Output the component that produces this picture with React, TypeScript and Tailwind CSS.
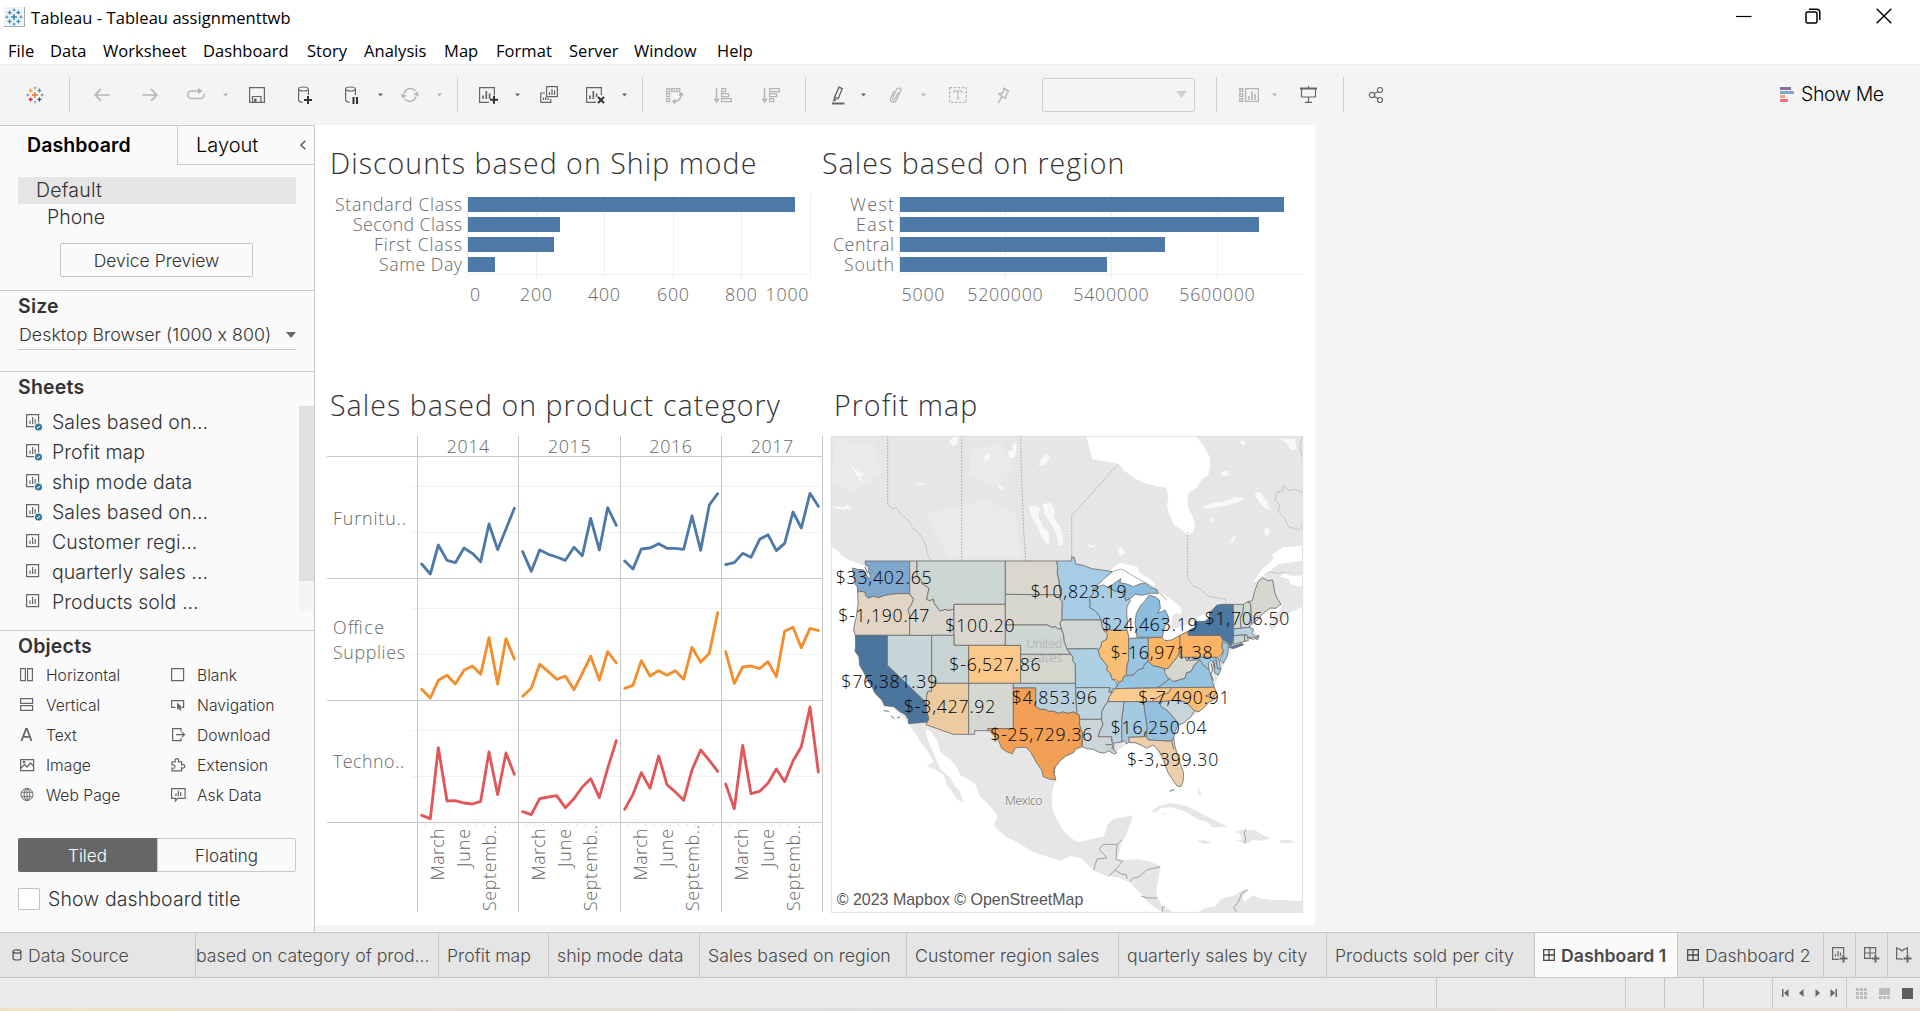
import React from "react";

const UI = "font-['Inter'] font-light [font-feature-settings:'calt'_0]";
const VIZ = "'Open Sans', 'Noto Sans', sans-serif";

type IconProps = { className?: string; children: React.ReactNode; w?: number; h?: number };

function Icon({ className = "", children, w = 18, h = 18 }: IconProps) {
  return (
    <svg
      className={"shrink-0 " + className}
      width={w}
      height={h}
      viewBox={`0 0 ${w} ${h}`}
      fill="none"
      stroke="currentColor"
      strokeWidth="1.2"
    >
      {children}
    </svg>
  );
}

function Caret({ className }: { className: string }) {
  return (
    <svg className={"shrink-0 " + className} width="5" height="4" viewBox="0 0 5 4" fill="currentColor">
      <path d="M0 .5h5L2.500 3.500z" />
    </svg>
  );
}

function Sep({ className }: { className: string }) {
  return <div className={"h-[35px] w-px shrink-0 bg-[#cfcfcf] " + className} />;
}

function Logo({ colors }: { colors: string[] }) {
  const plus = (x: number, y: number, r: number) => `M${x - r} ${y}h${2 * r}M${x} ${y - r}v${2 * r}`;
  return (
    <g strokeWidth="1.300">
      <path d={plus(9, 9, 3)} stroke={colors[0]} strokeWidth="1.500" />
      <path d={plus(4.6, 4.6, 2)} stroke={colors[1]} />
      <path d={plus(13.400, 4.600, 2)} stroke={colors[2]} />
      <path d={plus(4.600, 13.400, 2)} stroke={colors[3]} />
      <path d={plus(13.400, 13.400, 2)} stroke={colors[4]} />
      <path d={plus(9, 1.900, 1.500) + plus(9, 16.100, 1.500)} stroke={colors[5]} strokeWidth="1" />
      <path d={plus(1.900, 9, 1.500) + plus(16.100, 9, 1.500)} stroke={colors[6]} strokeWidth="1" />
    </g>
  );
}

function TitleBar() {
  return (
    <div className="flex h-8 items-center bg-white pl-1">
      <div className="mt-[2px] flex h-[20px] w-[21px] items-center justify-center border-r border-b border-[#a8a8a8] bg-[#f1f3f5]">
        <Icon>
          <Logo colors={["#2f86bd", "#3c8cc0", "#3c8cc0", "#3c8cc0", "#3c8cc0", "#3c8cc0", "#3c8cc0"]} />
        </Icon>
      </div>
      <div className="mt-[3px] ml-[6px] w-[270px] font-['Open_Sans'] text-[16.5px] leading-6 tracking-[0.06px] whitespace-nowrap text-black">
        Tableau - Tableau assignmenttwb
      </div>
      <div className="mr-[28px] ml-auto flex items-center text-black">
        <Icon w={16} h={16} className="mr-[53px]">
          <path d="M0 8.500h15.500" />
        </Icon>
        <Icon w={16} h={16} className="mr-[55px]">
          <rect x="1" y="4" width="11" height="11" rx="1.500" strokeWidth="1.500" />
          <path d="M4 1.200h7.500a3.300 3.300 0 0 1 3.300 3.300V12" strokeWidth="1.500" />
        </Icon>
        <Icon w={16} h={16}>
          <path d="M.7.7l14.600 14.600M15.300.7L.7 15.300" strokeWidth="1.400" />
        </Icon>
      </div>
    </div>
  );
}

function MenuBar() {
  const items: [string, string][] = [
    ["File", "w-[26px]"],
    ["Data", "w-[37px]"],
    ["Worksheet", "w-[84px]"],
    ["Dashboard", "w-[88px]"],
    ["Story", "w-[41px]"],
    ["Analysis", "w-[64px]"],
    ["Map", "w-[36px]"],
    ["Format", "w-[57px]"],
    ["Server", "w-[49px]"],
    ["Window", "w-[67px]"],
    ["Help", "w-[37px]"],
  ];
  return (
    <div className="flex h-8 items-center gap-4 bg-white pl-2 font-['Open_Sans'] text-[16.500px] tracking-[0.05px] text-black">
      {items.map(([label, w]) => (
        <span key={label} className={"pt-[5px] leading-6 whitespace-nowrap " + w}>
          {label}
        </span>
      ))}
    </div>
  );
}

function Toolbar() {
  const dim = "text-[#b4b4b4]";
  const on = "text-[#666]";
  return (
    <div className="flex h-[61px] items-center border-t border-[#ececec] bg-[#f4f4f4] pb-px pl-[26px]">
      <Icon>
        <Logo colors={["#e8762c", "#f0a04b", "#5c8ca3", "#c72037", "#2f4a75", "#7fa8c0", "#7a8fb5"]} />
      </Icon>
      <Sep className="ml-[25px]" />
      <Icon w={16} className={"ml-[24px] " + dim}>
        <path d="M15.500 9H1.500M7 3L1.200 9 7 15" strokeWidth="1.700" />
      </Icon>
      <Icon w={16} className={"ml-8 " + dim}>
        <path d="M.5 9h14M9 3l5.800 6L9 15" strokeWidth="1.700" />
      </Icon>
      <Icon className={"ml-[29px] " + dim}>
        <path d="M11 5H4a3 3 0 0 0-3 3v1.500a3 3 0 0 0 3 3h10a3 3 0 0 0 3-3V7.500" strokeWidth="1.400" />
        <path d="M11 2l4.500 3-4.500 3z" fill="currentColor" stroke="none" />
      </Icon>
      <Caret className={"ml-[18px] " + dim} />
      <Icon w={16} className={"ml-[21px] " + on}>
        <path d="M.6 1.600h14.800v14.800H.6zM3.500 16v-5.500h8.500V16" />
        <path d="M5 12.500h2.500V16H5z" fill="currentColor" stroke="none" />
      </Icon>
      <Icon w={14} className={"ml-[33px] " + on}>
        <ellipse cx="5.500" cy="3" rx="4.900" ry="2" />
        <path d="M.6 3v11c0 1 1.500 2 4 2.300M10.400 3v6" />
        <path d="M6 14h8M10 10v8" stroke="#333" strokeWidth="2" />
      </Icon>
      <Icon w={14} className={"ml-[33px] " + on}>
        <ellipse cx="5.500" cy="3" rx="4.900" ry="2" />
        <path d="M.6 3v11c0 1 1.500 2 4 2.300M10.400 3v6" />
        <path d="M8.500 11v7M12 11v7" stroke="#333" strokeWidth="2" />
      </Icon>
      <Caret className={"ml-[19px] " + on} />
      <Icon className={"ml-[18px] " + dim}>
        <path d="M3 7.500a6.500 6.500 0 0 1 11.500-2.300M15 10.500a6.500 6.500 0 0 1-11.500 2.300" strokeWidth="1.400" />
        <path d="M0 7.500l1.500 5 4-3zM18 10.500l-1.500-5-4 3z" fill="currentColor" stroke="none" />
      </Icon>
      <Caret className={"ml-[18px] " + dim} />
      <Sep className="ml-[15px]" />
      <Icon w={20} className={"ml-[21px] " + on}>
        <path d="M10 16.400H.6V1.600h14.800V9" />
        <path d="M4 13V9.500M7.300 13V5M10.600 13V7.500" strokeWidth="1.700" />
        <path d="M11 13.700h8M15 9.700v8" stroke="#333" strokeWidth="2" />
      </Icon>
      <Caret className={"ml-[16px] " + on} />
      <Icon className={"ml-[20px] " + on}>
        <path d="M6.600.6h10.800v10H6.600zM5 7H.8v9.400h10V13" />
        <path d="M9.500 9V6M12 9V3M14.500 9V4.500M3.500 14v-2.500M5.700 14v-3M8 14v-2" />
      </Icon>
      <Icon w={20} className={"ml-[28px] " + on}>
        <path d="M10 16.400H.6V1.600h14.800V9" />
        <path d="M4 13V9.500M7.300 13V5M10.600 11V7.500" strokeWidth="1.700" />
        <path d="M12 11l6 6M18 11l-6 6" stroke="#333" strokeWidth="2" />
      </Icon>
      <Caret className={"ml-[16px] " + on} />
      <Sep className="ml-[15px]" />
      <Icon className={"ml-[23px] " + dim}>
        <path d="M.7 2.700h3v3h-3zM5.700 2.700h3v3h-3zM10.700 2.700h3v3h-3zM.7 7.700h3v3h-3zM.7 12.700h3v3h-3z" />
        <path d="M15 8c0 5-3 7.500-7 7.500M13 9.500L15 7l2.200 2.500M9.500 13.500l-2.500 2 2.500 2" strokeWidth="1.500" />
      </Icon>
      <Icon className={"ml-[30px] " + dim}>
        <path d="M2.500 2v12M0 12.500l2.500 3.500 2.500-3.500" strokeWidth="1.500" />
        <path d="M7.600 2.600h4v3h-4zM7.600 7.600h7v3h-7zM7.600 12.600h9.800v3H7.600z" />
      </Icon>
      <Icon className={"ml-[30px] " + dim}>
        <path d="M2.500 2v12M0 12.500l2.500 3.500 2.500-3.500" strokeWidth="1.500" />
        <path d="M7.600 2.600h9.800v3H7.600zM7.600 7.600h7v3h-7zM7.600 12.600h4v3h-4z" />
      </Icon>
      <Sep className="ml-[25px]" />
      <Icon w={14} h={20} className={"ml-[25px] " + on}>
        <path d="M8 2.200l3.200 1.500-4 10-3.700-1.500zM3.800 12.500l-1 3 2.500-1" strokeWidth="1.400" />
        <path d="M1 18.500h12.500" strokeWidth="2" />
      </Icon>
      <Caret className={"ml-[16px] " + on} />
      <Icon w={13} className={"ml-[23px] " + dim}>
        <path d="M9.500 6L6 13c-1 1.800-3 .8-2.300-1L7.500 3.500c1.200-2.500 5.200-1.500 4.200 1.500L7.500 14c-1.500 3.500-7 2.500-6-1.500L5 5" />
      </Icon>
      <Caret className={"ml-[19px] " + dim} />
      <Icon className={"ml-[23px] " + dim}>
        <rect x=".7" y="1.700" width="16.600" height="14.600" strokeDasharray="2.500 1.500" />
        <path d="M5 7V5h8v2M9 5v8M7.500 13h3" />
      </Icon>
      <Icon w={13} className={"ml-[30px] " + dim}>
        <path d="M6 1.800l6 3.500M7.500 3L5 7.500 1.500 8l7 4.500 1-4 2-3.500M4.700 10.500L1.500 17" strokeWidth="1.400" />
      </Icon>
      <div className="ml-8 flex h-[34px] w-[153px] shrink-0 items-center justify-end rounded-[2px] border border-[#cfcfcf] pr-[7px]">
        <svg width="11" height="7" viewBox="0 0 11 7" fill="#cfcfcf">
          <path d="M0 0h11L5.500 7z" />
        </svg>
      </div>
      <Sep className="ml-[21px]" />
      <Icon w={20} className={"ml-[22px] " + dim}>
        <path d="M.7 2.600h3v2.800h-3zM.7 7.600h3v2.800h-3zM.7 12.600h3v2.800h-3zM6.600 2.600h12.800v12.800H6.600z" strokeWidth="1.400" />
        <path d="M10 14v-4M13 14V5.500M16 14V8" strokeWidth="1.600" />
      </Icon>
      <Caret className={"ml-[13px] " + dim} />
      <Icon w={17} className={"ml-[23px] " + on}>
        <path d="M0 2.500h17" strokeWidth="2" />
        <path d="M1.500 3v8h14V3M8.500 11v5M5 16.300h7M8.500 0v2" />
      </Icon>
      <Sep className="ml-[26px]" />
      <Icon w={16} className={"ml-[24px] " + on}>
        <circle cx="4" cy="9" r="2.700" />
        <circle cx="12" cy="4" r="2.500" />
        <circle cx="12" cy="14" r="2.500" />
        <path d="M6.300 7.800l3.500-2.400M6.300 10.400l3.600 2.200" />
      </Icon>
      <Icon w={14} className="ml-[396px]">
        <g stroke="none">
          <path d="M0 1h11v3H0z" fill="#8a6f9b" />
          <path d="M0 5h14v3H0z" fill="#7fa5cb" />
          <path d="M0 9h5v3H0z" fill="#f3a484" />
          <path d="M0 13h8v3H0z" fill="#fb6d78" />
        </g>
      </Icon>
      <span className={UI + " ml-[7px] text-[19.5px] tracking-[-0.35px] whitespace-nowrap text-black"}>Show Me</span>
    </div>
  );
}

function SheetRow({ name, used }: { name: string; used: boolean }) {
  return (
    <li className="flex h-[30px] items-center pl-[26px]">
      <Icon w={18} h={18} className="mt-[1px] text-[#666]">
        <path d="M.6 1.600h12v12H.6z" />
        <path d="M4 11V7.500M6.600 11V4M9.200 11V6" />
        {used && (
          <g stroke="none">
            <circle cx="12.500" cy="14" r="4.500" fill="#fafafa" />
            <circle cx="12.500" cy="14" r="3.600" fill="#35789b" />
            <path d="M10.700 14l1.300 1.300 2.200-2.500" fill="none" stroke="#fff" strokeWidth="1" />
          </g>
        )}
      </Icon>
      <span className="ml-[8px] pt-[2px] text-[19.5px] leading-[28px] tracking-[0.05px] whitespace-nowrap">{name}</span>
    </li>
  );
}

const objectIcons: Record<string, React.ReactNode> = {
  Horizontal: <path d="M.6.6h4.800v12H.6zM7.600.6h4.800v12H7.600z" />,
  Vertical: <path d="M.6.6h12v4.800H.6zM.6 7.600h12v4.800H.6z" />,
  Text: <path d="M1.500 13L6 1h1l4.500 12M3.500 8.800h6" strokeWidth="1.800" />,
  Image: (
    <>
      <path d="M.6 1.600h13v11H.6zM1 10l3.500-3.500L7 9l3.500-4L13.500 8" />
      <circle cx="4" cy="4.200" r=".8" />
    </>
  ),
  "Web Page": (
    <>
      <circle cx="7" cy="6.500" r="6" strokeWidth="1" />
      <ellipse cx="7" cy="6.500" rx="2.800" ry="6" strokeWidth="1" />
      <path d="M7 .5v12M1.500 4.300h11M1.500 8.700h11" strokeWidth=".9" />
    </>
  ),
  Blank: <path d="M.6.6h12v12H.6z" />,
  Navigation: (
    <>
      <path d="M4.500 9.400H.6V2.600h12v6.800h-1.500" />
      <path d="M6 4.500l5.500 5h-2.300l1.300 2.500-1.600.7-1.200-2.500L6 12z" fill="currentColor" stroke="none" />
    </>
  ),
  Download: <path d="M10 3.500V.6H1.600v12H10V10M5 6.600h8.500M11 4.200l2.500 2.400L11 9" />,
  Extension: (
    <path d="M1 3.800h3.200C3.700 1.500 4.500.6 5.800.6s2.200 1 1.600 3.200h3.200v3c2.200-.6 3.200.2 3.200 1.500s-1 2.200-3.200 1.600v3H1v-2.700c2.200.3 3-.5 3-1.600S3 6.700 1 7z" />
  ),
  "Ask Data": (
    <>
      <path d="M.6.6h13.500v9.800H6.500L4.500 13v-2.600H.6z" />
      <path d="M5 8V5.500M7.300 8V2.500M9.700 8V4" />
    </>
  ),
};

function ObjectItem({ name }: { name: string }) {
  return (
    <div className="flex h-[30px] items-center">
      <Icon w={15} h={14} className="text-[#666]">
        {objectIcons[name]}
      </Icon>
      <span className="ml-[11px] pt-px text-[15.700px] whitespace-nowrap">{name}</span>
    </div>
  );
}

function Sidebar() {
  const sheets: [string, boolean][] = [
    ["Sales based on...", true],
    ["Profit map", true],
    ["ship mode data", true],
    ["Sales based on...", true],
    ["Customer regi...", false],
    ["quarterly sales ...", false],
    ["Products sold ...", false],
  ];
  const head = "text-[19.5px] leading-[30px] font-semibold tracking-[0.2px]";
  return (
    <aside className={UI + " flex w-[315px] shrink-0 flex-col border-t border-r border-[#cacaca] bg-[#fafafa] text-[#333]"}>
      <div className="flex h-[39px]">
        <div className="w-[177px] pl-[27px] text-[19.5px] leading-[38px] font-semibold tracking-[0.1px] text-black">Dashboard</div>
        <div className="flex flex-1 items-center border-b border-l border-[#cacaca] pl-[18px] text-[20px] text-black">
          Layout
          <Icon w={6} h={10} className="mr-[8px] ml-auto text-[#555]">
            <path d="M5.300.7L1 5l4.300 4.300" strokeWidth="1.400" />
          </Icon>
        </div>
      </div>
      <div className="h-[126px] border-b border-[#cacaca] px-[18px] pt-3">
        <div className="h-[27px] bg-[#e5e5e5] pl-[18px] text-[19.5px] leading-[27px] tracking-[0.2px]">Default</div>
        <div className="h-[27px] pl-[29px] text-[19.5px] leading-[27px]">Phone</div>
        <div className="mt-3 ml-[42px] h-[34px] w-[193px] rounded-[2px] border border-[#c4c4c4] text-center text-[17.5px] leading-[34px]">
          Device Preview
        </div>
      </div>
      <div className="h-[81px] border-b border-[#cacaca] px-[18px]">
        <div className={"h-[29px] " + head}>Size</div>
        <div className="flex h-[30px] items-center justify-between border-b border-[#cacaca] text-[17.800px] tracking-[0.05px]">
          <span className="pt-[2px] pl-[1px] whitespace-nowrap">Desktop Browser (1000 x 800)</span>
          <svg width="10" height="6" viewBox="0 0 10 6" fill="#666">
            <path d="M0 0h10L5 6z" />
          </svg>
        </div>
      </div>
      <div className="flex h-[259px] flex-col border-b border-[#cacaca]">
        <div className={"h-[34px] pl-[18px] " + head}>Sheets</div>
        <div className="flex h-[205px]">
          <ul className="flex-1">
            {sheets.map(([n, u], i) => (
              <SheetRow key={i} name={n} used={u} />
            ))}
          </ul>
          <div className="w-[15px] bg-[#f4f4f4]">
            <div className="h-[175px] bg-[#e0e0e0]" />
          </div>
        </div>
      </div>
      <div className={"h-[29px] pl-[18px] " + head}>Objects</div>
      <div className="flex pl-5">
        <div className="w-[151px]">
          {["Horizontal", "Vertical", "Text", "Image", "Web Page"].map((n) => (
            <ObjectItem key={n} name={n} />
          ))}
        </div>
        <div>
          {["Blank", "Navigation", "Download", "Extension", "Ask Data"].map((n) => (
            <ObjectItem key={n} name={n} />
          ))}
        </div>
      </div>
      <div className="mt-[28px] ml-[18px] flex h-[34px] w-[278px] text-center text-[17px]">
        <div className="w-[139px] rounded-l-[2px] bg-[#666] leading-[36px] text-white">Tiled</div>
        <div className="w-[139px] rounded-r-[2px] border border-[#c8c8c8] leading-[34px]">Floating</div>
      </div>
      <div className="mt-4 flex items-center pl-[18px]">
        <div className="h-[22px] w-[22px] rounded-[1px] border border-[#c4c4c4] bg-white" />
        <span className="ml-[8px] text-[19.5px] leading-[22px] tracking-[0.1px] whitespace-nowrap">Show dashboard title</span>
      </div>
    </aside>
  );
}

/* A text label spaced to an exact run length. */
function Label({
  x,
  y,
  len,
  anchor = "start",
  size = 17.8,
  children,
  fill = "#666",
}: {
  x: number;
  y: number;
  len: number;
  anchor?: "start" | "middle" | "end";
  size?: number;
  children: string;
  fill?: string;
}) {
  return (
    <text x={x} y={y} textLength={len} textAnchor={anchor} fontSize={size} fill={fill} fontFamily={VIZ} fontWeight="300">
      {children}
    </text>
  );
}

type Bar = { name: string; len: number; end: number };

function BarChart({
  viewBox,
  bars,
  x0,
  ticks,
  axisEnd,
  children,
}: {
  viewBox: string;
  bars: Bar[];
  x0: number;
  ticks: number[];
  axisEnd: number;
  children: React.ReactNode;
}) {
  return (
    <svg className="block" width="500" height="185" viewBox={viewBox}>
      <path d={ticks.map((t) => `M${t}.5 194v85`).join("") + `M${x0 - 1} 274.500H${axisEnd}`} stroke="#f0f0f0" />
      {bars.map((b, i) => (
        <g key={b.name}>
          <Label x={x0 - 6} y={211 + i * 20} len={b.len} anchor="end">
            {b.name}
          </Label>
          <rect x={x0} y={197 + i * 20} width={b.end - x0} height="15" fill="#4e79a7" />
        </g>
      ))}
      {children}
    </svg>
  );
}

const series: [string, string[]][] = [
  [
    "#4e79a7",
    [
      "305,402 331,432 355,345 381,391 406,398 432,354 457,370 482,395 507,282 533,359 583,235",
      "608,365 634,424 659,360 685,373 710,381 736,391 762,352 787,377 812,265 838,360 863,233 889,286",
      "914,393 939,417 964,357 990,354 1016,341 1041,355 1066,355 1091,358 1116,258 1142,361 1168,225 1193,191",
      "1217,404 1243,398 1268,370 1293,382 1319,328 1344,314 1369,362 1394,340 1419,246 1444,294 1470,190 1495,229",
    ],
  ],
  [
    "#f28e2b",
    [
      "305,778 331,804 355,751 381,736 406,762 432,721 457,708 482,733 507,623 533,762 558,626 583,687",
      "608,799 634,775 659,703 685,725 710,748 736,738 762,779 787,730 812,679 838,750 863,665 889,699",
      "914,775 939,766 964,692 990,738 1016,722 1041,736 1066,722 1091,748 1116,652 1142,697 1168,670 1193,548",
      "1217,665 1243,760 1268,711 1293,708 1319,716 1344,695 1369,740 1394,604 1419,592 1444,653 1470,595 1495,602",
    ],
  ],
  [
    "#e15759",
    [
      "305,1156 331,1166 355,953 381,1113 406,1112 432,1119 457,1122 482,1114 507,966 533,1094 558,969 583,1033",
      "608,1145 634,1154 659,1106 685,1101 710,1097 736,1133 762,1106 787,1071 812,1046 838,1103 863,1015 889,932",
      "914,1138 939,1093 964,1028 990,1075 1016,978 1041,1064 1066,1086 1091,1111 1116,1020 1142,960 1168,991 1193,1024",
      "1217,1062 1243,1136 1268,946 1293,1091 1319,1084 1344,1060 1369,1017 1394,1055 1419,993 1444,950 1470,831 1495,1026",
    ],
  ],
];

function CategoryChart() {
  const cols = [417, 518, 620, 721, 822];
  return (
    <svg className="block" width="510" height="501" viewBox="315 424 510 501">
      <path
        d={[486, 532, 608, 654, 730, 776].map((y) => `M412 ${y}.5H822`).join("")}
        stroke="#f2f2f2"
      />
      <path
        d={cols.slice(0, 4).map((c) => Array.from({ length: 11 }, (_, i) => `M${c + 8.500 + i * 8.400} 823v3`).join("")).join("")}
        stroke="#e4e4e4"
      />
      <path
        d={cols.map((c) => `M${c}.5 436V912`).join("") + [456, 578, 700, 822].map((y) => `M327 ${y}.5H823`).join("")}
        stroke="#c8c8c8"
      />
      {["2014", "2015", "2016", "2017"].map((y, i) => (
        <Label key={y} x={468 + i * 101.300} y={453} len={42.500} anchor="middle">
          {y}
        </Label>
      ))}
      <Label x={333} y={524.500} len={73}>Furnitu..</Label>
      <Label x={333} y={634} len={51}>Office</Label>
      <Label x={333} y={659} len={72}>Supplies</Label>
      <Label x={333} y={768} len={71}>Techno..</Label>
      {cols.slice(0, 4).map((c) => (
        <g key={c} transform={`translate(${c - 417} 0)`}>
          <g transform="translate(444 880.500) rotate(-90)">
            <Label x={0} y={0} len={52}>March</Label>
          </g>
          <g transform="translate(470 867) rotate(-90)">
            <Label x={0} y={0} len={38}>June</Label>
          </g>
          <g transform="translate(495.500 911) rotate(-90)">
            <Label x={0} y={0} len={86}>Septemb..</Label>
          </g>
        </g>
      ))}
      <g transform="translate(320 430) scale(.33333)" fill="none" strokeWidth="8.500" strokeLinejoin="round" strokeLinecap="round">
        {series.map(([color, lines]) => lines.map((p) => <polyline key={p} points={p} stroke={color} />))}
      </g>
    </svg>
  );
}

const states: [string, string][] = [
  ["#80a8cf", "120,393 254,393 254,491 222,491 200,493 180,496 160,503 145,499 130,504 122,498 120,487 108,484 98,486 97,470 90,462 93,452 88,440 82,414 98,418 116,420 124,434 134,448 136,438 130,424 132,410 122,405"],
  ["#e3d5c3", "98,486 108,484 120,487 122,498 130,504 145,499 160,503 180,496 200,493 222,491 253,491 266,508 259,524 249,540 254,553 254,616 91,616 86,600 88,585 94,560 100,520"],
  ["#4c759e", "91,616 187,616 187,705 304,818 305,842 312,866 308,876 251,881 250,868 240,853 226,846 206,830 178,827 172,812 150,790 144,776 126,748 118,730 104,706 102,680 90,664 92,650"],
  ["#c6d5d8", "187,616 320,616 320,784 309,784 305,796 304,818 187,705"],
  ["#d7d5cd", "254,393 276,393 276,436 290,452 290,460 312,475 305,508 314,512 325,507 328,520 345,543 360,538 372,541 387,537 387,616 254,616 254,553 249,540 259,524 266,508 254,491"],
  ["#ccd7d4", "276,393 541,393 541,523 387,523 387,537 372,541 360,538 345,543 328,520 325,507 314,512 305,508 312,475 290,460 290,452 276,436"],
  ["#dbd6cf", "387,523 541,523 541,646 387,646"],
  ["#c9d5d5", "320,616 387,616 387,646 431,646 431,760 320,760"],
  ["#f9c88a", "431,646 587,646 587,760 431,760"],
  ["#edcba1", "320,760 431,760 431,913 385,913 303,884 312,866 305,842 304,818 305,796 309,784 320,784"],
  ["#d5d7d1", "431,760 565,760 565,896 489,896 492,902 449,902 449,913 431,913"],
  ["#dad7cf", "541,393 695,393 698,410 697,430 702,450 704,475 708,495 541,493"],
  ["#d8d7cf", "541,493 708,495 704,505 712,515 711,570 705,580 710,598 698,596 690,590 680,592 668,585 541,585"],
  ["#ced7d4", "541,585 668,585 680,592 690,590 698,596 710,598 716,615 718,635 726,655 735,673 587,673 587,646 541,646"],
  ["#d5d7cf", "587,673 735,673 745,682 742,690 751,702 751,760 587,760"],
  ["#bbd2de", "565,760 751,760 752,800 756,852 745,846 730,850 714,846 700,850 684,843 672,845 660,838 645,838 632,830 632,774 565,774"],
  ["#f1a056", "565,774 632,774 632,830 645,838 660,838 672,845 684,843 700,850 714,846 730,850 745,846 763,855 764,885 773,912 770,950 752,956 745,968 722,978 704,994 690,1012 687,1030 693,1050 672,1047 655,1040 650,1020 636,1000 618,968 604,952 580,952 570,955 562,972 545,965 530,955 522,935 505,915 487,896 565,896"],
  ["#a6cde5", "695,393 740,393 740,380 748,382 752,402 775,406 800,416 830,420 862,425 835,448 815,468 803,478 805,492 793,502 796,522 793,532 810,542 822,556 828,570 711,570 712,515 704,505 708,495 704,475 702,450 697,430 698,410"],
  ["#d1d7d2", "711,570 828,570 832,590 836,600 848,613 845,628 830,636 828,650 820,660 816,656 726,657 718,635 716,615 710,598 705,580"],
  ["#add0e4", "726,657 816,656 820,662 825,680 840,700 848,708 845,720 855,728 862,748 875,758 877,768 870,778 862,776 860,786 851,786 855,773 752,773 751,702 742,690 745,682"],
  ["#bdd3de", "752,773 855,773 851,786 862,788 852,802 848,815 838,830 830,846 830,868 764,868 763,855 756,852"],
  ["#ccd6d6", "764,868 830,868 834,885 826,900 820,920 860,920 860,932 868,945 860,955 876,968 868,972 850,962 838,970 820,966 805,958 785,956 772,950 773,912 764,885"],
  ["#a9cee4", "805,478 818,470 835,465 850,472 868,482 890,488 900,500 902,512 912,506 916,512 906,530 905,550 907,575 906,601 836,600 832,590 828,570 822,556 810,542 793,532 796,522 793,502 805,492"],
  ["#f8bf75", "836,600 906,601 911,618 911,690 905,710 905,730 895,742 893,752 880,757 876,750 862,748 855,728 845,720 848,708 840,700 825,680 820,662 828,650 830,636 845,628 848,613"],
  ["#8dbddd", "850,472 870,458 888,446 884,458 905,462 925,470 945,462 962,458 975,472 995,478 1000,490 975,490 950,496 930,492 918,505 912,506 902,512 900,500 890,488 868,482"],
  ["#8dbddd", "972,496 990,500 1003,510 1006,535 998,550 1010,545 1020,540 1031,562 1028,575 1018,590 1012,622 936,622 934,600 930,580 934,550 948,525 958,515"],
  ["#9ac4df", "911,625 970,624 970,692 958,704 955,715 940,720 925,735 905,737 905,710 911,690"],
  ["#fdb563", "970,624 1010,622 1020,632 1040,630 1065,616 1065,655 1058,680 1045,695 1030,715 1018,717 1000,710 985,708 970,695"],
  ["#fdb366", "1065,616 1088,604 1090,616 1186,616 1194,630 1190,648 1196,665 1180,682 1065,682"],
  ["#4c77a1", "1088,604 1112,590 1108,575 1140,574 1158,560 1155,548 1175,526 1190,523 1225,523 1226,615 1222,642 1215,650 1212,640 1194,630 1186,616 1090,616"],
  ["#4c77a1", "1213,652 1250,640 1256,644 1225,656"],
  ["#d3d6d0", "1225,523 1256,523 1254,545 1246,565 1248,595 1226,597"],
  ["#cdd7d4", "1256,523 1268,515 1277,520 1280,580 1272,592 1248,595 1246,565 1254,545"],
  ["#d7d7cf", "1268,515 1282,512 1290,480 1300,455 1312,444 1330,452 1343,450 1350,490 1358,508 1368,522 1352,535 1335,534 1312,552 1300,568 1286,578 1280,580 1277,520"],
  ["#b8d3df", "1226,597 1272,592 1286,598 1280,608 1290,620 1302,616 1298,630 1286,622 1268,622 1264,614 1226,617"],
  ["#c6d6d8", "1226,617 1258,615 1260,634 1225,643"],
  ["#d4d7d2", "1258,615 1268,618 1270,632 1260,634"],
  ["#9cc7e1", "1194,636 1210,642 1210,655 1206,680 1194,700 1184,690 1196,665 1190,648"],
  ["#a2cae3", "1080,682 1172,682 1178,716 1188,716 1180,735 1170,730 1165,700 1158,690 1150,700 1152,720 1135,705 1120,692 1105,690 1090,694"],
  ["#b3d1e2", "1172,682 1182,688 1186,716 1178,716"],
  ["#98c4e0", "905,737 925,735 940,720 955,715 958,704 970,695 985,708 1000,710 1018,717 1024,735 1034,742 1020,758 998,773 870,776 877,768 880,757 893,752 895,742"],
  ["#d8d7cf", "1018,717 1030,715 1045,695 1058,680 1065,660 1065,682 1080,682 1085,692 1105,690 1125,690 1108,705 1098,725 1085,728 1080,745 1062,750 1045,755 1030,745 1020,730"],
  ["#96c3e0", "998,773 1020,758 1034,745 1045,755 1062,750 1080,745 1085,728 1098,725 1108,705 1125,690 1135,705 1152,720 1160,740 1162,755 1168,772"],
  ["#fccb90", "870,776 1040,773 1032,788 1010,795 988,808 980,815 850,815 852,802 862,788"],
  ["#f9be78", "1040,773 1168,772 1176,790 1165,800 1172,806 1150,818 1138,832 1122,845 1108,842 1085,818 1060,812 1040,812 1010,815 980,815 988,808 1010,795 1032,788"],
  ["#c8d6d7", "1010,815 1040,812 1060,812 1085,818 1108,842 1098,860 1075,880 1062,884 1050,868 1030,845 1005,826"],
  ["#93c0df", "955,815 1010,815 1005,826 1030,845 1050,868 1060,885 1050,905 1046,925 1040,934 970,930 964,920 966,890"],
  ["#a4cae2", "897,815 955,815 966,890 964,920 910,922 914,934 905,942 898,932 890,936 890,870"],
  ["#c0d3dc", "848,815 897,815 890,870 890,936 875,938 862,940 860,920 820,920 826,900 834,885 830,868 830,846 838,830"],
  ["#ecd0ab", "910,922 964,920 970,930 1040,934 1046,925 1050,950 1062,990 1076,1030 1074,1055 1068,1070 1056,1068 1040,1045 1030,1030 1022,1010 1015,985 1000,960 985,945 965,955 948,945 930,938 914,938"],
];

const mainland =
  "18,18 1434,18 1434,528 1412,540 1396,546 1366,574 1342,602 1330,588 1348,560 1370,532 1360,520 1312,552 1280,590 1300,620 1265,622 1222,652 1200,700 1180,740 1168,772 1176,800 1122,845 1060,885 1045,934 1074,1030 1066,1066 1040,1045 985,945 910,938 870,968 772,953 704,994 690,1012 693,1050 684,1072 680,1110 682,1136 692,1160 714,1200 730,1218 756,1236 790,1230 812,1224 835,1220 842,1204 848,1182 866,1166 896,1162 920,1156 922,1168 908,1200 904,1216 890,1236 884,1262 876,1286 900,1290 940,1288 972,1294 1006,1308 1002,1340 996,1370 994,1396 1012,1428 1036,1440 1044,1448 1016,1448 990,1434 968,1416 950,1392 930,1374 916,1358 880,1342 842,1338 806,1322 784,1298 766,1284 736,1278 708,1292 672,1282 620,1264 580,1238 545,1222 516,1198 508,1182 518,1160 504,1140 486,1118 466,1100 452,1064 430,1048 406,1036 392,1006 372,986 346,966 336,930 316,904 302,896 306,925 320,956 332,985 346,1018 374,1040 388,1066 404,1084 414,1112 418,1120 396,1108 380,1084 366,1068 356,1034 330,1018 304,1008 326,996 306,960 290,942 276,918 262,900 251,881 206,830 172,812 118,730 90,664 91,616 98,486 82,414 60,388 36,366 18,352";

function ProfitMap() {
  return (
    <svg className="block" width="490" height="501" viewBox="825 424 490 501">
      <g transform="translate(825 430) scale(.33333)">
        <clipPath id="frame">
          <rect x="18" y="18" width="1416" height="1430" />
        </clipPath>
        <g clipPath="url(#frame)">
          <polygon fill="#e6e6e6" points={mainland} />
          {/* faint terrain shading */}
          <g fill="#ececec" fillOpacity=".55">
            <path d="M300 250l180-40 90 40 20 130-220 6zM440 60l90-20 40 70-50 60-90-30z" />
            <path d="M30 30l120 10 20 90-90 60-60-40z" />
          </g>
          {/* Hudson Bay and the Pacific inlets */}
          <g fill="#fff">
            <polygon points="782,18 790,40 796,66 802,88 828,92 856,96 880,102 900,124 930,146 960,160 1000,170 1024,172 1030,200 1026,226 1032,252 1048,286 1068,298 1088,316 1104,306 1110,288 1104,262 1092,240 1086,212 1092,188 1112,176 1130,150 1150,134 1156,108 1154,80 1138,52 1112,18" />
            <polygon points="18,350 34,360 60,384 92,398 120,408 134,420 138,438 132,448 122,432 100,420 82,414 50,384 18,362" />
            <polygon points="1434,346 1402,350 1374,352 1340,374 1346,386 1322,408 1300,432 1284,458 1296,456 1318,440 1340,418 1362,402 1392,398 1434,392" />
            <polygon points="1434,436 1400,438 1374,430 1366,440 1390,448 1398,462 1420,470 1434,466" />
          </g>
          {/* Canadian lakes */}
          <g fill="#f8f8f8">
            <polygon points="612,232 632,226 646,236 640,260 654,290 670,306 674,330 668,346 650,320 634,282 620,262" />
            <polygon points="652,222 676,218 690,238 686,262 702,284 714,314 714,344 700,346 694,312 680,286 658,252" />
            <polygon points="385,20 402,20 396,42 384,48 372,34" />
            <polygon points="548,66 562,58 568,34 576,52 570,80 554,86" />
            <polygon points="640,104 650,84 664,72 674,82 666,100 648,108" />
            <polygon points="474,84 490,70 498,74 490,88 478,92" />
            <polygon points="270,158 302,158 290,165" />
            <polygon points="518,164 534,170 534,180 522,176" />
            <polygon points="72,98 98,124 122,134 106,138 118,162 94,136" />
            <polygon points="22,228 54,232 66,222 80,236 54,240 34,236" />
            <polygon points="1128,232 1160,220 1200,214 1230,200 1258,204 1238,218 1196,228 1150,236" />
            <polygon points="1288,188 1306,186 1324,214 1338,240 1320,234 1302,216" />
            <polygon points="1320,292 1336,296 1328,322 1318,312" />
            <polygon points="1212,342 1222,322 1236,314 1226,334" />
            <polygon points="1150,270 1164,262 1162,276" />
            <polygon points="1186,126 1210,122 1212,136 1194,138" />
            <polygon points="1240,32 1262,32 1256,48" />
            <polygon points="1364,24 1388,28 1408,26 1416,56 1400,62 1384,40" />
            <polygon points="786,338 798,346 812,344 808,352 792,350" />
            <polygon points="878,358 890,350 900,368 886,380" />
          </g>
          {/* Great Lakes */}
          <g fill="#fff">
            <polygon points="806,476 826,450 850,430 866,412 886,398 900,402 936,410 944,428 974,446 990,462 984,476 960,466 946,462 924,470 904,462 884,458 888,446 868,460 846,474 826,476" />
            <polygon points="902,522 918,505 932,494 952,492 972,494 958,515 948,525 936,548 930,580 934,600 930,622 912,624 906,600" />
            <polygon points="974,492 1000,484 1030,502 1054,520 1072,540 1066,556 1056,548 1042,556 1040,584 1026,590 1032,562 1020,540 1000,550 1006,530" />
            <polygon points="1006,630 1016,606 1030,598 1062,592 1104,576 1110,586 1088,604 1064,616 1040,630 1020,634" />
            <polygon points="1108,566 1130,556 1160,546 1168,540 1160,558 1140,574 1112,576" />
          </g>
          {/* Caribbean islands and the north coast of South America */}
          <g fill="#e6e6e6">
            <polygon points="978,1146 1000,1128 1035,1120 1060,1122 1090,1130 1110,1140 1150,1162 1176,1174 1206,1190 1160,1192 1148,1176 1118,1168 1090,1150 1064,1138 1034,1132 1010,1134 992,1146" />
            <polygon points="1008,1150 1022,1148 1020,1156" />
            <polygon points="1202,1230 1228,1232 1252,1230 1246,1212 1232,1206 1250,1200 1290,1200 1312,1214 1336,1226 1304,1232 1284,1230 1264,1242 1240,1234" />
            <polygon points="1116,1232 1140,1230 1158,1238 1136,1242" />
            <polygon points="1366,1230 1394,1230 1410,1236 1392,1240 1366,1238" />
            <polygon points="1118,1448 1140,1434 1172,1428 1186,1408 1210,1400 1230,1396 1252,1380 1270,1376 1254,1402 1256,1416 1286,1396 1300,1404 1336,1410 1380,1410 1434,1414 1434,1448" />
            <polygon points="1118,1070 1126,1084 1130,1102 1120,1092" />
          </g>
          {/* Province and country borders */}
          <g fill="none" stroke="#ababab" strokeWidth="2.500" strokeDasharray="6 3">
            <polyline points="188,18 188,222 202,236 214,234 232,256 250,272 262,292 286,316 302,344 306,370 316,392" />
            <polyline points="410,18 410,392" />
            <polyline points="587,18 589,120 596,300 602,392" />
            <polyline points="880,102 740,258 740,380" />
            <polyline points="1088,306 1088,446 1104,468 1126,478 1152,500 1180,504 1202,508 1202,522" />
            <polyline points="1432,20 1424,50 1432,86" />
            <polyline points="1433,186 1410,178 1392,182 1376,166 1374,182 1356,186 1350,210 1364,226 1360,246 1380,264 1390,290 1420,300 1433,288" />
            <polyline points="1290,460 1312,440 1330,426 1360,430 1380,426" />
          </g>
          <g fill="none" stroke="#a0a0a0" strokeWidth="3">
            <polyline points="891,1230 876,1243 834,1243 823,1258 846,1284 816,1287 806,1320" />
            <polyline points="876,1243 873,1288 893,1294 870,1320 852,1338" />
            <polyline points="870,1320 888,1332 904,1334 906,1346" />
            <polyline points="1006,1310 966,1320 942,1340 926,1344 914,1354" />
            <polyline points="948,1398 966,1404 996,1404" />
            <polyline points="1012,1448 1012,1432 1020,1430" />
            <polyline points="1262,1198 1258,1212 1262,1226 1258,1240" />
            <polyline points="1268,1380 1250,1390 1240,1416 1226,1432 1236,1448" />
          </g>
          <g stroke="#6f6f6f" strokeWidth="2.600" strokeLinejoin="round">
            {states.map(([fill, pts]) => (
              <polygon key={pts} points={pts} fill={fill} />
            ))}
          </g>
          <g fill="none" stroke="#6f6f6f" strokeWidth="3">
            <path d="M176 842l16 2M198 858l10 8M216 864l10-4M1034 1084l14-6M1158 700l6 20-8 14 10 18M1166 690l4 24M1266 622l20 6 14-8M690 1010l-4 20M842 944l20 0 6 14M1040 934l6 24M1160 790l-18 8 20 6M120 410l8 20" />
            <path d="M862 425l28-8 50 30 45 24M975 490l26-4 24 24" stroke="#aaa" />
          </g>
          <g fontFamily={VIZ} textAnchor="middle">
            <text x="658" y="654" fontSize="38" fill="#b6b9b6" textLength="108">United</text>
            <text x="658" y="697" fontSize="38" fill="#b6b9b6" textLength="106">States</text>
            <text x="596" y="1125" fontSize="38" fill="#8f8f8f" stroke="#f3f3f3" strokeWidth="5" paintOrder="stroke" textLength="114">Mexico</text>
          </g>
          {mapLabels.map(([t, x, y, len]) => (
            <Label key={t} x={x} y={y} len={len} size={53} fill="#000">
              {t}
            </Label>
          ))}
          <rect x="26" y="1377" width="760" height="62" fill="#fff" fillOpacity=".6" />
          <text x="35" y="1425" fontSize="48" fill="#555" textLength="740" lengthAdjust="spacingAndGlyphs" fontFamily="'Liberation Sans', Arial, sans-serif">
            © 2023 Mapbox © OpenStreetMap
          </text>
        </g>
        <rect x="19" y="19" width="1414" height="1428" fill="none" stroke="#e0e0e0" strokeWidth="3" />
      </g>
    </svg>
  );
}

const mapLabels: [string, number, number, number][] = [
  ["$33,402.65", 32, 462, 288],
  ["$-1,190.47", 40, 576, 273],
  ["$100.20", 361, 606, 208],
  ["$10,823.19", 617, 504, 288],
  ["$24,463.19", 830, 603, 288],
  ["$1,706.50", 1139, 585, 254],
  ["$-16,971.38", 857, 687, 306],
  ["$-6,527.86", 373, 724, 274],
  ["$76,381.39", 49, 774, 288],
  ["$-3,427.92", 237, 849, 274],
  ["$4,853.96", 560, 822, 256],
  ["$-7,490.91", 940, 822, 274],
  ["$16,250.04", 857, 912, 288],
  ["$-25,729.36", 496, 933, 306],
  ["$-3,399.30", 906, 1009, 274],
];

function Panel({ title, className, pad, children }: { title: string; className: string; pad: string; children: React.ReactNode }) {
  return (
    <section className={"pt-[18px] " + className}>
      <h2 className={"h-[39px] font-['Open_Sans'] text-[28.500px] leading-[40px] font-light tracking-[1.05px] whitespace-nowrap text-[#333] " + pad}>
        {title}
      </h2>
      {children}
    </section>
  );
}

function Dashboard() {
  return (
    <main className="h-[800px] w-[1000px] shrink-0 bg-white">
      <div className="flex h-[242px]">
        <Panel title="Discounts based on Ship mode" className="w-[500px]" pad="pl-[15px]">
          <BarChart
            viewBox="315 182 500 185"
            x0={468}
            axisEnd={811}
            ticks={[467, 536, 604, 673, 741, 810]}
            bars={[
              { name: "Standard Class", len: 127, end: 795 },
              { name: "Second Class", len: 109, end: 560 },
              { name: "First Class", len: 88, end: 554 },
              { name: "Same Day", len: 83, end: 495 },
            ]}
          >
            <Label x={475} y={301} len={11} anchor="middle">0</Label>
            <Label x={536} y={301} len={32} anchor="middle">200</Label>
            <Label x={604} y={301} len={32} anchor="middle">400</Label>
            <Label x={673} y={301} len={32} anchor="middle">600</Label>
            <Label x={741} y={301} len={32} anchor="middle">800</Label>
            <Label x={808.500} y={301} len={43} anchor="end">1000</Label>
          </BarChart>
        </Panel>
        <Panel title="Sales based on region" className="w-[500px]" pad="pl-[7px]">
          <BarChart
            viewBox="815 182 500 185"
            x0={900}
            axisEnd={1303}
            ticks={[899, 1005, 1111, 1217]}
            bars={[
              { name: "West", len: 44, end: 1284 },
              { name: "East", len: 38, end: 1259 },
              { name: "Central", len: 61, end: 1165 },
              { name: "South", len: 50, end: 1107 },
            ]}
          >
            <Label x={901.500} y={301} len={43}>5000</Label>
            <Label x={1005} y={301} len={75.500} anchor="middle">5200000</Label>
            <Label x={1111} y={301} len={75.500} anchor="middle">5400000</Label>
            <Label x={1217} y={301} len={75.500} anchor="middle">5600000</Label>
          </BarChart>
        </Panel>
      </div>
      <div className="flex">
        <Panel title="Sales based on product category" className="w-[510px]" pad="pl-[15px]">
          <CategoryChart />
        </Panel>
        <Panel title="Profit map" className="w-[490px]" pad="pl-[9px]">
          <ProfitMap />
        </Panel>
      </div>
    </main>
  );
}

function GridIcon({ className }: { className?: string }) {
  return (
    <Icon w={12} h={12} className={className}>
      <path d="M.7.7h10.600v10.600H.7zM6 .7v10.600M.7 6h10.600" strokeWidth="1.300" />
    </Icon>
  );
}

function SheetTabs() {
  const tabs: [string, string][] = [
    ["based on category of prod...", "w-[243px]"],
    ["Profit map", "w-[110px] pl-2"],
    ["ship mode data", "w-[151px] pl-2"],
    ["Sales based on region", "w-[207px] pl-2"],
    ["Customer region sales", "w-[212px] pl-2"],
    ["quarterly sales by city", "w-[208px] pl-2"],
    ["Products sold per city", "w-[208px] pl-2"],
  ];
  const cell = "flex h-full shrink-0 items-center border-r border-[#c6c6c6] whitespace-nowrap ";
  return (
    <div className={UI + " flex h-[46px] items-center border-t border-b border-[#c6c6c6] bg-[#e5e5e5] text-[17.700px] text-[#4a4a4a]"}>
      <div className={cell + "w-[196px] pl-[12px]"}>
        <Icon w={10} h={12}>
          <ellipse cx="5" cy="2.500" rx="3.900" ry="1.700" />
          <path d="M1.100 2.500v7c0 2 7.800 2 7.800 0v-7" />
        </Icon>
        <span className="ml-[6px] pt-[3px]">Data Source</span>
      </div>
      {tabs.map(([t, w]) => (
        <div key={t} className={cell + "pt-[3px] " + w}>
          {t}
        </div>
      ))}
      <div className={cell + "w-[143px] bg-[#fafafa] pl-2 font-semibold"}>
        <GridIcon />
        <span className="ml-[6px] pt-[2px]">Dashboard 1</span>
      </div>
      <div className={cell + "w-[146px] pl-[9px]"}>
        <GridIcon />
        <span className="ml-[6px] pt-[3px]">Dashboard 2</span>
      </div>
      <div className={cell + "w-8 justify-center"}>
        <Icon w={16} h={16} className="text-[#666]">
          <path d="M7 12.400H.6V.6h11V7M3.500 9.500V7M6 9.500V4M8.500 9V5.500" />
          <path d="M7.500 11.500h8M11.500 7.500v8" strokeWidth="2" />
        </Icon>
      </div>
      <div className={cell + "w-8 justify-center"}>
        <Icon w={16} h={16} className="text-[#666]">
          <path d="M7 11.400H.6V.6h11V7M6 .6v10.800M.6 6h11" />
          <path d="M7.500 11.500h8M11.500 7.500v8" strokeWidth="2" />
        </Icon>
      </div>
      <div className="flex flex-1 justify-center">
        <Icon w={16} h={16} className="text-[#666]">
          <path d="M6.500 13l-1.500-1.200H.6V.8L3 2.200h1L6 4l2-1.800h1L11.400.8V7" />
          <path d="M7.500 11.500h8M11.500 7.500v8" strokeWidth="2" />
        </Icon>
      </div>
    </div>
  );
}

function StatusBar() {
  const cell = "h-full shrink-0 border-r border-[#c9c9c9] ";
  return (
    <div className="flex h-[30px] items-center bg-[#eaeaea] text-[#666]">
      <div className={cell + "w-[1437px]"} />
      <div className={cell + "w-[189px]"} />
      <div className={cell + "w-[39px]"} />
      <div className={cell + "w-[39px]"} />
      <div className={cell + "w-[69px]"} />
      <div className={cell + "flex w-[74px] items-center gap-[9px] pl-[9px]"}>
        <svg width="7" height="8" viewBox="0 0 7 8" fill="currentColor"><path d="M0 0h1.500v8H0zM6.500 0v8L2 4z" /></svg>
        <svg width="7" height="8" viewBox="0 0 7 8" fill="currentColor"><path d="M5.500 0v8L1 4z" /></svg>
        <svg width="7" height="8" viewBox="0 0 7 8" fill="currentColor"><path d="M1.500 0v8L6 4z" /></svg>
        <svg width="7" height="8" viewBox="0 0 7 8" fill="currentColor"><path d="M.5 0v8L5 4zM5.500 0H7v8H5.500z" /></svg>
      </div>
      <div className="flex flex-1 items-center gap-[12px] pl-[9px]">
        <svg width="11" height="11" viewBox="0 0 11 11" fill="#bcbcbc">
          <path d="M0 0h3v3H0zM4 0h3v3H4zM8 0h3v3H8zM0 4h3v3H0zM4 4h3v3H4zM8 4h3v3H8zM0 8h3v3H0zM4 8h3v3H4zM8 8h3v3H8z" />
        </svg>
        <svg width="11" height="11" viewBox="0 0 11 11" fill="#bcbcbc">
          <path d="M0 0h11v7H0zM0 8h3v3H0zM4 8h3v3H4zM8 8h3v3H8z" />
        </svg>
        <div className="h-[11px] w-[11px] bg-[#5e5e5e]" />
      </div>
    </div>
  );
}

export default function App() {
  return (
    <div className="flex h-[1011px] w-[1920px] flex-col overflow-hidden bg-[#f4f4f4]">
      <TitleBar />
      <MenuBar />
      <Toolbar />
      <div className="flex h-[807px]">
        <Sidebar />
        <Dashboard />
      </div>
      <SheetTabs />
      <StatusBar />
      <div className="h-[3px] bg-linear-to-r from-[#efe2c4] via-[#dcdde2] to-[#ece0d4]" />
    </div>
  );
}
